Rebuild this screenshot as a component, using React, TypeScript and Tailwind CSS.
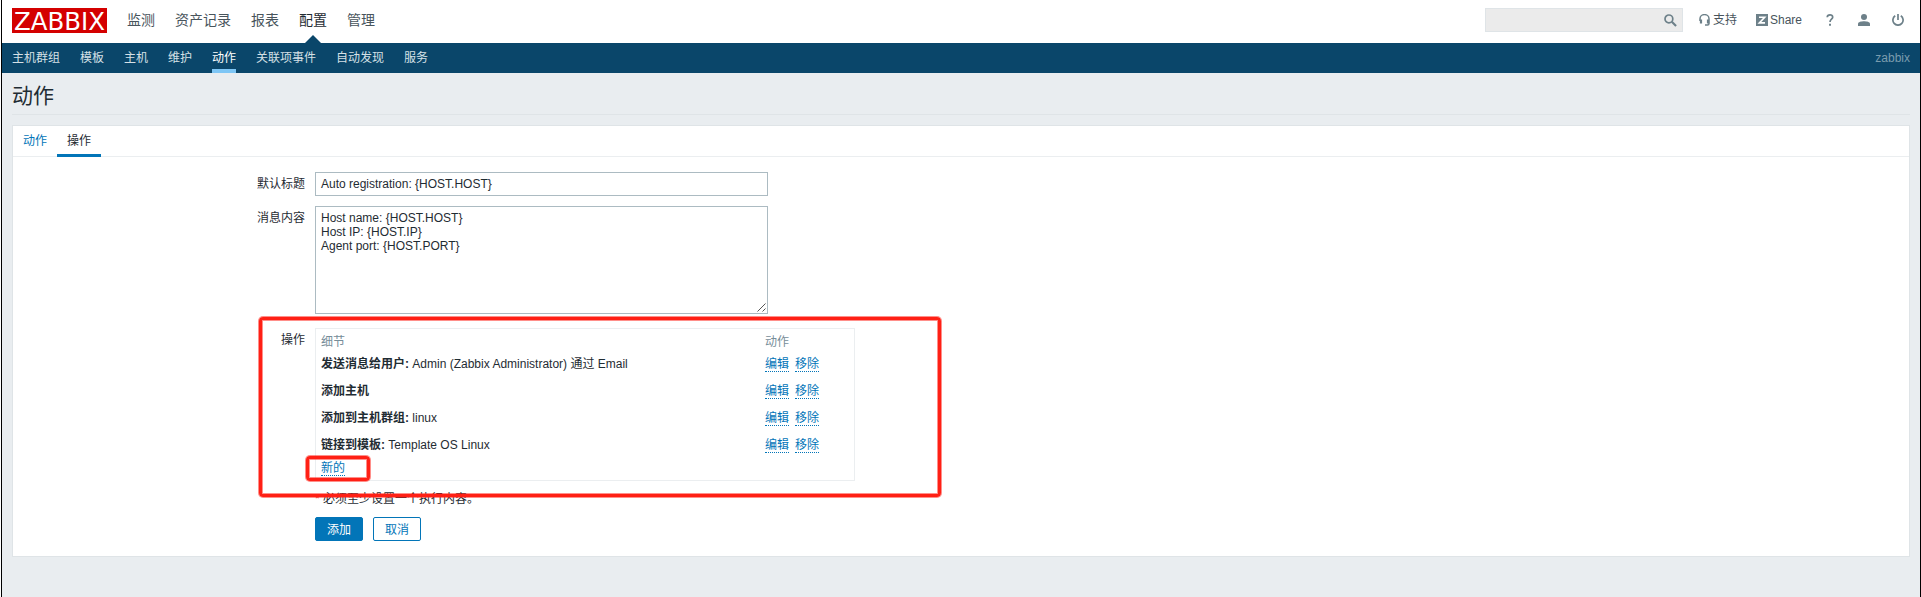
const MAIN_MENU = ['监测', '资产记录', '报表', '配置', '管理'];
const SUB_MENU = ['主机群组', '模板', '主机', '维护', '动作', '关联项事件', '自动发现', '服务'];

const OPERATIONS = [
  { label: '发送消息给用户:', value: 'Admin (Zabbix Administrator) 通过 Email' },
  { label: '添加主机', value: '' },
  { label: '添加到主机群组:', value: 'linux' },
  { label: '链接到模板:', value: 'Template OS Linux' },
];

function ActionLink({ children }: { children: string }) {
  return (
    <a href="#" className="block h-[15px] border-b border-dotted border-[#0275b8] leading-[14px] text-[#0275b8]">
      {children}
    </a>
  );
}

function Header() {
  return (
    <header className="flex h-[43px] items-start bg-white pl-[10px] pr-[15px]">
      <a href="#" className="mt-2 h-[25px] w-[95px] bg-[#d40000]">
        <svg className="overflow-visible" width="95" height="25" viewBox="0 0 95 25" role="img" aria-label="ZABBIX">
          <text x="2" y="21.5" textLength="91" lengthAdjust="spacingAndGlyphs" fill="#fff" className="font-['DejaVu_Sans',sans-serif] text-[25px]">
            ZABBIX
          </text>
        </svg>
      </a>
      <nav className="ml-5 flex gap-5 text-[14px] leading-5">
        {MAIN_MENU.map((item) => (
          <a key={item} href="#" className={item === '配置' ? 'relative h-[43px] pt-[10px] text-[#1f2c33]' : 'pt-[10px] text-[#48545c]'}>
            {item}
            {item === '配置' && (
              <svg className="absolute bottom-0 left-[6px]" width="16" height="8" viewBox="0 0 16 8">
                <path d="M0 8 8 0l8 8z" fill="#0a466a" />
              </svg>
            )}
          </a>
        ))}
      </nav>
      <div className="ml-auto flex text-[12px] leading-4 text-[#48545c]">
        <div className="mt-2 flex h-6 w-[198px] items-center justify-end border border-[#dfe4e7] bg-[#ebebeb] pr-[5px]">
          <svg width="13" height="13" viewBox="0 0 13 13" fill="none" stroke="#6d8089">
            <circle cx="4.9" cy="4.9" r="3.9" strokeWidth="1.7" />
            <path d="m7.8 7.8 4.3 4.3" strokeWidth="2.1" />
          </svg>
        </div>
        <a href="#" className="ml-4 mt-3 flex h-4 items-center gap-[3px]">
          <svg width="11" height="12" viewBox="0 0 11 12" fill="none" stroke="#6d8089">
            <path d="M1 7V4.8a4.5 4.2 0 0 1 9 0V9.5q0 1.5-1.5 1.5H6" strokeWidth="1.5" />
            <path d="M2 5.5v4M9 5.5v4" strokeWidth="2.2" />
          </svg>
          支持
        </a>
        <a href="#" className="ml-[19px] mt-3 flex h-4 items-center gap-[2px]">
          <svg width="12" height="12" viewBox="0 0 12 12">
            <path d="M0 0h12v12H0z" fill="#6d8089" />
            <path d="M3 3.2h5.7L3.3 8.9H9" fill="none" stroke="#fff" strokeWidth="1.6" />
          </svg>
          Share
        </a>
        <a href="#" aria-label="Help" className="ml-6 mt-[14px]">
          <svg width="8" height="12" viewBox="0 0 8 12" fill="none" stroke="#6d8089" strokeWidth="1.7">
            <path d="M1.2 3.3C1.3 1.7 2.5.9 4 .9c1.6 0 2.7.8 2.7 2.3C6.7 5.2 4 5.3 4 8" />
            <path d="M4 9.8v2" strokeWidth="1.9" />
          </svg>
        </a>
        <a href="#" aria-label="Profile" className="ml-6 mt-[14px]">
          <svg width="12" height="12" viewBox="0 0 12 12" fill="#6d8089">
            <circle cx="6" cy="3" r="3" />
            <path d="M0 12V9.8C0 8 3.5 7.3 6 7.3s6 .7 6 2.5V12z" />
          </svg>
        </a>
        <a href="#" aria-label="Sign out" className="ml-[22px] mr-px mt-[14px]">
          <svg width="12" height="12" viewBox="0 0 12 12" fill="none" stroke="#6d8089" strokeWidth="1.7">
            <path d="M6 0v6M3.2 1.8a5.1 5.1 0 1 0 5.6 0" />
          </svg>
        </a>
      </div>
    </header>
  );
}

function SubNav() {
  return (
    <nav className="flex h-[30px] gap-5 bg-[#0a466a] px-[10px] leading-[31px] text-[#d5e0e6]">
      {SUB_MENU.map((item) => (
        <a key={item} href="#" className={item === '动作' ? 'h-[30px] border-b-4 border-[#7ec6f5] text-white' : ''}>
          {item}
        </a>
      ))}
      <span className="ml-auto leading-[30px] text-[#7a9cae]">zabbix</span>
    </nav>
  );
}

function OperationsTable() {
  return (
    <div className="h-[153px] w-[540px] border border-[#ebeef0] px-[5px]">
      <div className="flex h-[25px] text-[#768d99]">
        <span className="w-[444px] leading-[27px]">细节</span>
        <span className="leading-[27px]">动作</span>
      </div>
      {OPERATIONS.map((op) => (
        <div key={op.label} className="flex h-[27px]">
          <div className="w-[444px] pt-[2px] leading-4">
            <b>{op.label}</b> {op.value}
          </div>
          <div className="flex gap-[6px] pt-[3px]">
            <ActionLink>编辑</ActionLink>
            <ActionLink>移除</ActionLink>
          </div>
        </div>
      ))}
      <div className="-mt-px flex">
        <ActionLink>新的</ActionLink>
      </div>
    </div>
  );
}

export default function App() {
  return (
    <div className="relative h-[597px] w-[1921px] overflow-hidden border-l border-white bg-[#e9edf0] font-['Liberation_Sans','Noto_Sans_CJK_SC',sans-serif] text-[12px] text-[#1f2c33]">
      <div className="h-full border-x border-black">
        <Header />
        <SubNav />
        <main className="px-[10px]">
          <h1 className="h-[42px] border-b border-[#dfe4e7] pt-[9px] text-[21px] leading-7">动作</h1>
          <section className="mt-[10px] h-[432px] border border-[#dfe4e7] bg-white">
            <div className="flex h-[31px] border-b border-[#ebeef0] leading-[31px]">
              <a href="#" className="px-[10px] text-[#0275b8]">动作</a>
              <a href="#" className="h-[31px] border-b-[3px] border-[#0275b8] px-[10px]">操作</a>
            </div>
            <form className="grid grid-cols-[292px_1fr] gap-x-[10px] pt-[15px]">
              <label className="pt-1 text-right leading-4">默认标题</label>
              <div className="flex h-6 w-[453px] items-center border border-[#acbbc2] px-[5px]">Auto registration: {'{HOST.HOST}'}</div>
              <label className="mt-[10px] pt-1 text-right leading-4">消息内容</label>
              <div className="mt-[10px] flex h-[108px] w-[453px] justify-between border border-[#acbbc2] pl-[5px] pr-px pt-1">
                <div className="leading-[14px]">
                  <p>Host name: {'{HOST.HOST}'}</p>
                  <p>Host IP: {'{HOST.IP}'}</p>
                  <p>Agent port: {'{HOST.PORT}'}</p>
                </div>
                <svg className="mb-px self-end" width="9" height="9" viewBox="0 0 9 9" fill="none" stroke="#555" strokeWidth="1">
                  <path d="M.5 8.5l8-8M5.5 8.5l3-3" />
                </svg>
              </div>
              <label className="mt-[14px] pt-1 text-right leading-4">操作</label>
              <div className="mt-[14px]">
                <OperationsTable />
              </div>
              <p className="col-start-2 mt-[10px] h-4 leading-4">
                <span className="text-[#e33734]">*</span> 必须至少设置一个执行内容。
              </p>
              <div className="col-start-2 mt-[10px] flex gap-[10px]">
                <button type="button" className="h-6 w-12 rounded-[2px] border border-[#0275b8] bg-[#0275b8] pt-px leading-[22px] text-white">添加</button>
                <button type="button" className="h-6 w-12 rounded-[2px] border border-[#0275b8] bg-white pt-px leading-[22px] text-[#0275b8]">取消</button>
              </div>
            </form>
          </section>
        </main>
      </div>
      <div className="pointer-events-none absolute left-[258px] top-[317px] h-[180px] w-[682px] rounded-[4px] border-[3px] border-[#ff2015] shadow-[0_0_0_1px_#ff201580,inset_0_0_0_1px_#ff201580]" />
      <div className="pointer-events-none absolute left-[305px] top-[456px] h-[25px] w-[64px] rounded-[4px] border-[3px] border-[#ff2015] shadow-[0_0_0_1px_#ff201580,inset_0_0_0_1px_#ff201580]" />
    </div>
  );
}
